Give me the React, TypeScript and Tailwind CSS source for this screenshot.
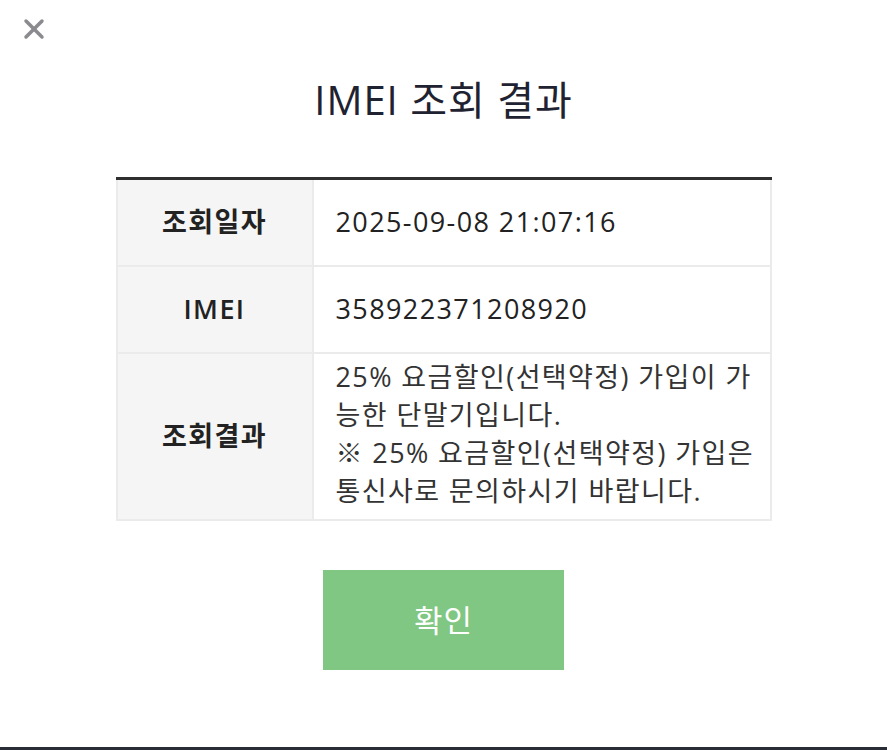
import { X } from "lucide-react";

const rows = [
  { label: "조회일자", value: "2025-09-08 21:07:16", h: "h-[87px]" },
  { label: "IMEI", value: "358922371208920", h: "h-[87px]" },
];

export default function App() {
  return (
    <div className="w-[887px] h-[750px] bg-white flex flex-col relative font-['Open_Sans','Noto_Sans_CJK_KR',sans-serif] text-[#222]">
      <button className="absolute left-[18px] top-[13px] text-[#8a8a8f]">
        <X className="w-[32px] h-[32px]" strokeWidth={2.6} />
      </button>

      <h1 className="mt-[72px] text-center text-[40px] leading-[56px] tracking-[1px] text-[#1f2230]">IMEI 조회 결과</h1>

      <div className="mt-[49px] mx-auto w-[656px] border-t-[3px] border-[#2f2f2f]">
        <div className="border-x-2 border-b-2 border-[#ebebeb] text-[27px] tracking-[1.4px]">
          {rows.map((r) => (
            <div key={r.label} className={`flex ${r.h} border-b-2 border-[#ebebeb]`}>
              <div className="w-[196px] shrink-0 bg-[#f5f5f5] border-r-2 border-[#ebebeb] flex items-center justify-center font-semibold">
                {r.label}
              </div>
              <div className="flex-1 flex items-center pl-[22px]">{r.value}</div>
            </div>
          ))}
          <div className="flex h-[165px]">
            <div className="w-[196px] shrink-0 bg-[#f5f5f5] border-r-2 border-[#ebebeb] flex items-center justify-center font-semibold">
              조회결과
            </div>
            <div className="flex-1 pl-[22px] pt-[4px] leading-[38px] text-[#333] whitespace-nowrap">
              25% 요금할인(선택약정) 가입이 가
              <br />능한 단말기입니다.
              <br />※ 25% 요금할인(선택약정) 가입은
              <br />통신사로 문의하시기 바랍니다.
            </div>
          </div>
        </div>
      </div>

      <button className="mt-[49px] mx-auto w-[241px] h-[100px] bg-[#7fc782] text-white text-[31px] tracking-[1px]">확인</button>

      <div className="mt-auto h-[3px] bg-[#2a2d36]" />
    </div>
  );
}
